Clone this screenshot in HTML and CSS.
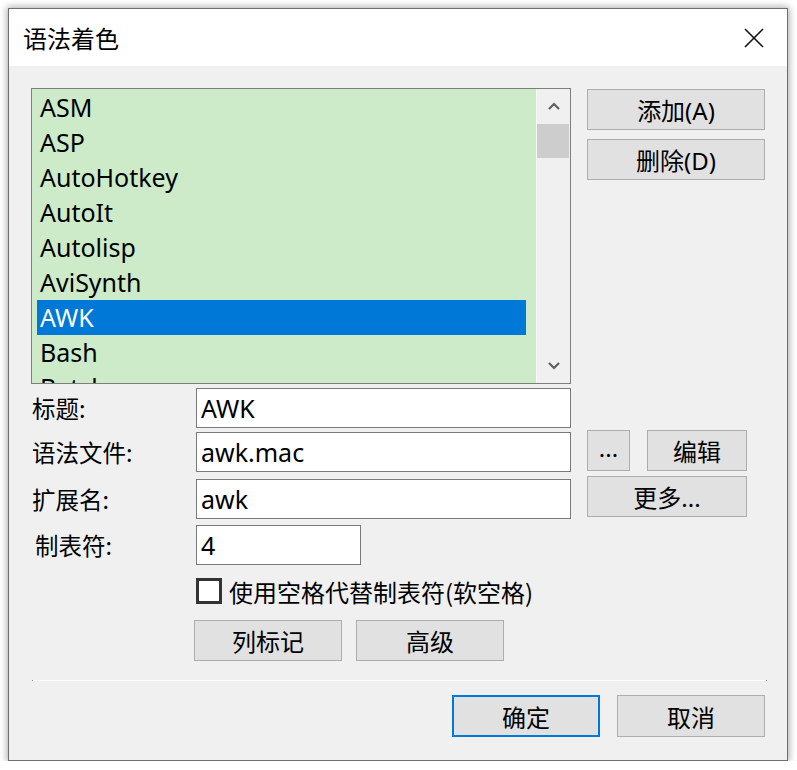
FILE: index.html
```html
<!DOCTYPE html>
<html lang="zh-CN">
<head>
<meta charset="utf-8">
<title>语法着色</title>
<link rel="stylesheet" href="styles.css">
</head>
<body>
<div class="window">
  <div class="titlebar">
    <span class="title">语法着色</span>
    <svg class="close" viewBox="0 0 20 20" width="20" height="20"><path d="M1 1 L19 19 M19 1 L1 19" stroke="#111" stroke-width="1.6" fill="none"/></svg>
  </div>
  <div class="content">
    <div class="top">
      <div class="listbox">
        <div class="items">
          <div class="item">ASM</div>
          <div class="item">ASP</div>
          <div class="item">AutoHotkey</div>
          <div class="item">AutoIt</div>
          <div class="item">Autolisp</div>
          <div class="item">AviSynth</div>
          <div class="item selected">AWK</div>
          <div class="item">Bash</div>
          <div class="item partial">Batch</div>
        </div>
        <div class="scrollbar">
          <div class="sb-btn"><svg viewBox="0 0 12 10" width="12" height="10"><path d="M1 8 L6 3 L11 8" stroke="#606060" stroke-width="2.2" fill="none"/></svg></div>
          <div class="thumb"></div>
          <div class="sb-space"></div>
          <div class="sb-btn"><svg viewBox="0 0 12 10" width="12" height="10"><path d="M1 2 L6 7 L11 2" stroke="#606060" stroke-width="2.2" fill="none"/></svg></div>
        </div>
      </div>
      <div class="side">
        <button class="btn side-btn">添加(A)</button>
        <button class="btn side-btn second">删除(D)</button>
      </div>
    </div>

    <div class="row r1">
      <label class="lbl">标题:</label>
      <div class="input">AWK</div>
    </div>
    <div class="row r2">
      <label class="lbl">语法文件:</label>
      <div class="input">awk.mac</div>
      <button class="btn dots">...</button>
      <button class="btn edit">编辑</button>
    </div>
    <div class="row r3">
      <label class="lbl">扩展名:</label>
      <div class="input">awk</div>
      <button class="btn more">更多...</button>
    </div>
    <div class="row r4">
      <label class="lbl indent">制表符:</label>
      <div class="input short">4</div>
    </div>

    <div class="check-row">
      <span class="checkbox"></span>
      <span class="check-text">使用空格代替制表符(软空格)</span>
    </div>

    <div class="btn-row">
      <button class="btn mid">列标记</button>
      <button class="btn mid">高级</button>
    </div>

    <div class="separator"></div>

    <div class="footer">
      <button class="btn foot default">确定</button>
      <button class="btn foot">取消</button>
    </div>
  </div>
</div>
</body>
</html>
```
FILE: styles.css
```css
* { box-sizing: border-box; }
html, body {
  margin: 0;
  padding: 0;
  background: #ffffff;
}
body {
  font-family: "Noto Sans", "Noto Sans CJK SC", sans-serif;
  font-size: 24px;
  color: #000;
}
.window {
  margin: 8px 0 0 8px;
  width: 780px;
  height: 753px;
  border: 1px solid #6f6f6f;
  background: #f0f0f0;
  box-shadow: 0 0 7px 1px rgba(0,0,0,0.35);
}
.titlebar {
  height: 57px;
  background: #fff;
  display: flex;
  align-items: center;
  justify-content: space-between;
  padding: 0 23px 0 14px;
}
.title {
  font-size: 24px;
  font-family: "Noto Sans CJK SC", sans-serif;
}
.close { display: block; }
.content {
  padding: 22px 22px 0 22px;
}
.top {
  display: flex;
  gap: 16px;
}
.listbox {
  width: 540px;
  height: 296px;
  border: 1px solid #7f7f7f;
  background: #cdebc9;
  display: flex;
  overflow: hidden;
}
.items {
  flex: 1;
  padding: 1px 10px 0 5px;
  overflow: hidden;
}
.item {
  height: 35px;
  line-height: 35px;
  padding-left: 3px;
  font-size: 25px;
  white-space: nowrap;
}
.item.partial {
  height: 13px;
  overflow: hidden;
}
.item.selected {
  background: #0078d7;
  color: #fff;
}
.scrollbar {
  width: 34px;
  background: #f0f0f0;
  display: flex;
  flex-direction: column;
  border-left: 1px solid #f8f8f8;
}
.sb-btn {
  height: 34px;
  display: flex;
  align-items: center;
  justify-content: center;
}
.thumb {
  height: 34px;
  margin: 1px 1px 0 0;
  background: #cdcdcd;
}
.sb-space { flex: 1; }
.side {
  display: flex;
  flex-direction: column;
  padding-top: 1px;
}
.btn {
  font-family: "Noto Sans", "Noto Sans CJK SC", sans-serif;
  font-size: 24px;
  color: #000;
  background: #e1e1e1;
  border: 1px solid #adadad;
  padding: 0;
  margin: 0;
  display: flex;
  align-items: center;
  justify-content: center;
}
.side-btn {
  width: 178px;
  height: 41px;
}
.side-btn.second { margin-top: 9px; }
.row {
  display: flex;
  align-items: center;
  height: 40px;
}
.r1 { margin-top: 4px; }
.r2 { margin-top: 4px; }
.r3 { margin-top: 7px; }
.r4 { margin-top: 6px; }
.lbl {
  width: 165px;
  padding-left: 1px;
  font-family: "Noto Sans CJK SC", sans-serif;
  font-size: 23.5px;
}
.lbl.indent { padding-left: 4px; }
.input {
  width: 375px;
  height: 40px;
  border: 1px solid #7a7a7a;
  background: #fff;
  padding-left: 4px;
  font-size: 25px;
  line-height: 38px;
}
.input.short { width: 165px; }
.dots {
  width: 43px;
  height: 41px;
  margin: -3px 0 0 16px;
  align-items: flex-end;
  padding-bottom: 6px;
}
.edit {
  width: 100px;
  height: 41px;
  margin: -3px 0 0 17px;
}
.more {
  width: 160px;
  height: 41px;
  margin: -5px 0 0 16px;
}
.check-row {
  display: flex;
  align-items: center;
  margin-top: 13px;
  padding-left: 165px;
  height: 26px;
}
.checkbox {
  width: 26px;
  height: 26px;
  border: 3px solid #333;
  background: #fff;
}
.check-text {
  margin-left: 7px;
  font-family: "Noto Sans CJK SC", sans-serif;
  font-size: 24px;
}
.btn-row {
  display: flex;
  gap: 14px;
  margin-top: 16px;
  padding-left: 163px;
}
.mid {
  width: 148px;
  height: 41px;
}
.separator {
  margin: 19px 0 0 1px;
  height: 1px;
  background: #fff;
  border-left: 1px solid #8a8a8a;
  border-right: 1px solid #8a8a8a;
  width: 735px;
}
.footer {
  display: flex;
  justify-content: flex-end;
  gap: 17px;
  margin-top: 14px;
}
.foot {
  width: 148px;
  height: 42px;
}
.foot.default {
  border: 2px solid #0078d7;
}
```
